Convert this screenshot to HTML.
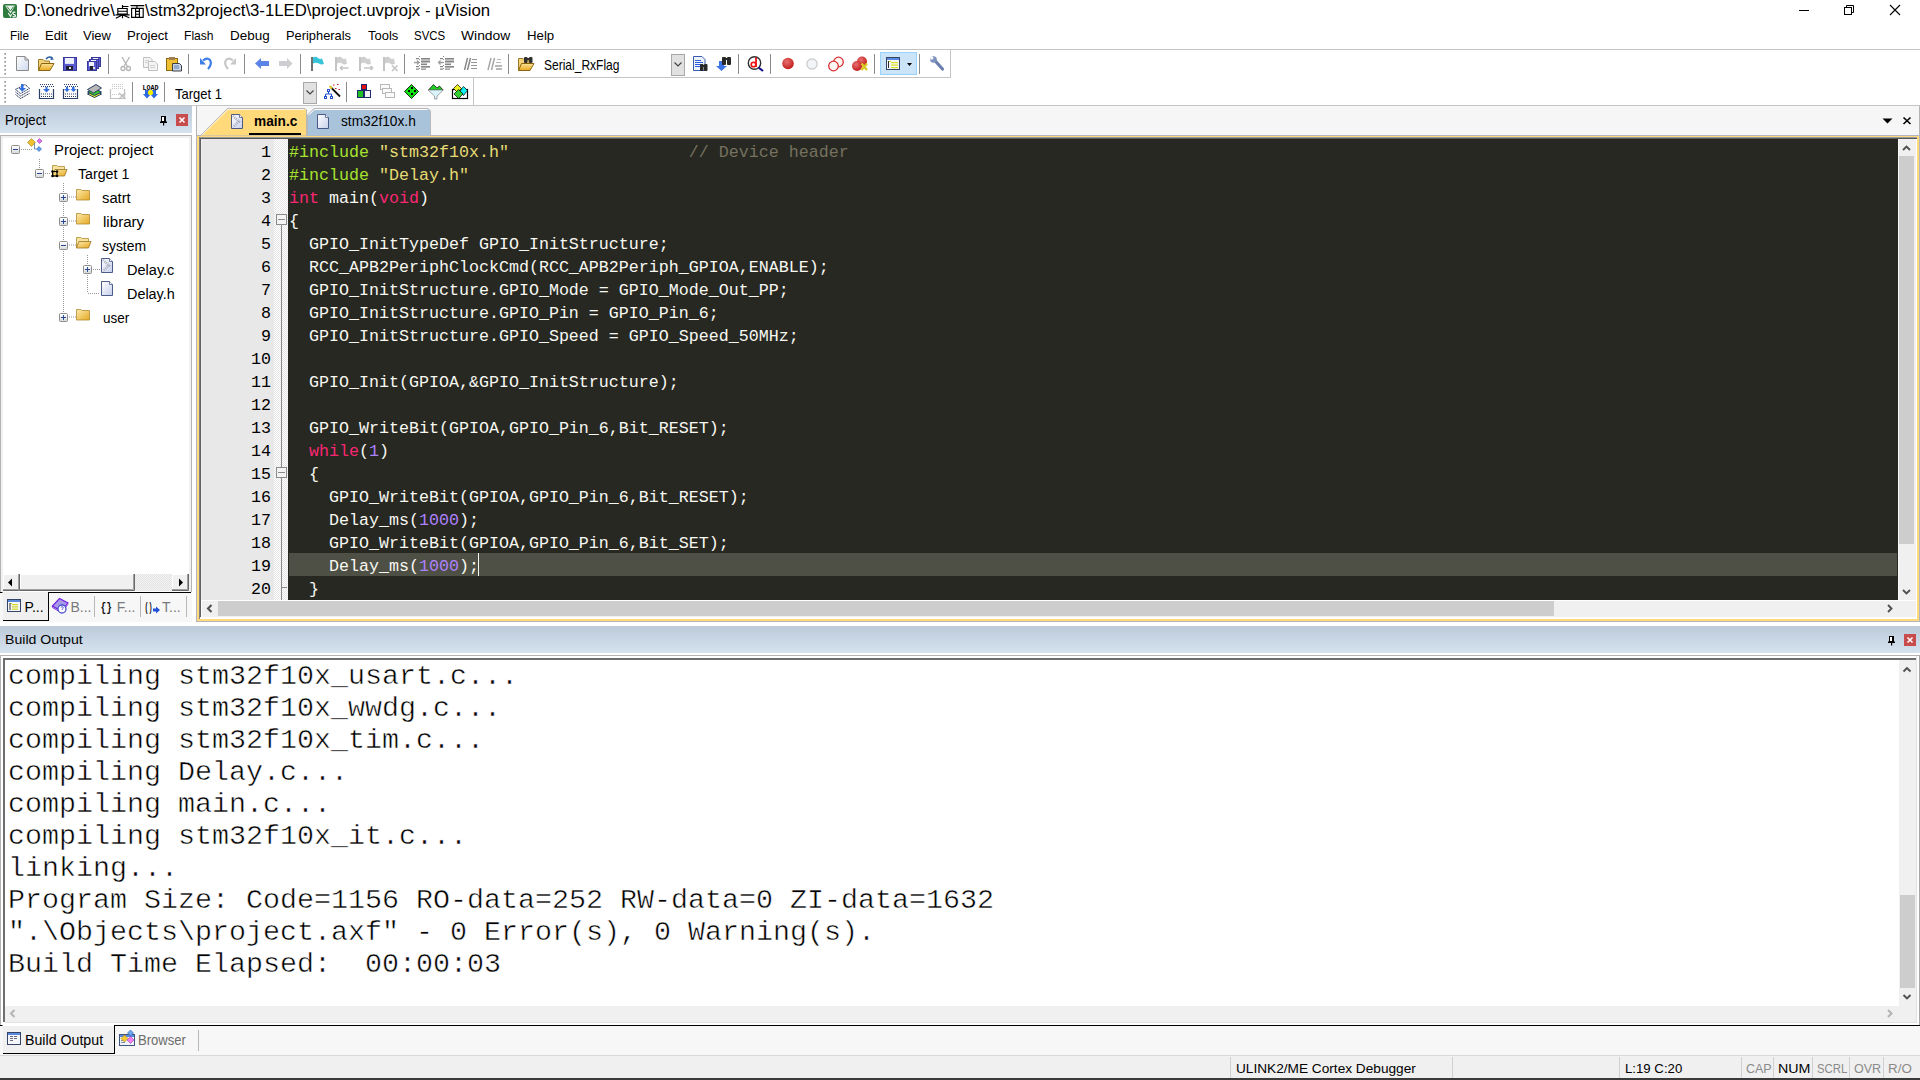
<!DOCTYPE html>
<html><head><meta charset="utf-8">
<style>
*{margin:0;padding:0;box-sizing:border-box}
html,body{width:1920px;height:1080px;overflow:hidden;background:#fff;font-family:"Liberation Sans",sans-serif;color:#000}
.a{position:absolute;display:block}
.t{position:absolute;white-space:pre;line-height:1}
.hdr{background:linear-gradient(#bccad9,#d6e2ef)}
.code{position:absolute;left:289px;font-family:"Liberation Mono",monospace;font-size:16.67px;line-height:23px;color:#f8f8f2;white-space:pre}
.kw{color:#f92672}.pp{color:#a6e22e}.st{color:#e6db74}.nu{color:#ae81ff}.cm{color:#75715e}
.ln{position:absolute;left:201px;width:70px;text-align:right;font-family:"Liberation Mono",monospace;font-size:16.67px;line-height:23px;color:#000;white-space:pre}
.bo{position:absolute;left:8px;-webkit-text-stroke:0.5px #fff;font-family:"Liberation Mono",monospace;font-size:28.33px;line-height:32px;color:#000;white-space:pre}
</style></head><body>
<svg class="a" style="left:0px;top:0px" width="1920" height="26" viewBox="0 0 1920 26"><rect x="3" y="4" width="14" height="14" rx="2" fill="#2f7a3d"/><path d="M5 5.5 L10.5 13.5 L15 5.5 Z" fill="#e8f2ea"/><path d="M7 6.5 L10.5 11 L13.5 6.5" fill="none" stroke="#2f7a3d" stroke-width="0.9"/><path d="M8.2 13 L10.5 16.5 L11.5 14" fill="none" stroke="#e8f2ea" stroke-width="1.2"/><path d="M15.5 12.3 Q13 11.5 12.8 13.2 Q12.8 14.4 14.3 14.6 Q15.8 15 15.3 16.3 Q14.8 17.3 12.6 16.6" fill="none" stroke="#ffffff" stroke-width="1.2"/><rect x="1799" y="10" width="10" height="1" fill="#000"/><path d="M1846.5 7.5 V5.5 H1853.5 V12.5 H1851.5" fill="none" stroke="#000"/><rect x="1844.5" y="7.5" width="7" height="7" fill="none" stroke="#000"/><path d="M1890 5 L1900 15 M1900 5 L1890 15" stroke="#000" stroke-width="1.1"/><g stroke="#000" stroke-width="1.15" fill="none" stroke-linecap="butt"><path d="M122.5 5 V8.5 M122.5 6.5 H128.5 M117.8 8.5 H127.2 V14 H117.8 Z M117.8 11.2 H127.2 M115.5 14.8 H129.6 M122.5 14.8 V18.2 M121.8 15.2 L115.8 18.2 M123.2 15.2 L129.4 17.8"/><path d="M130.5 5.6 H144.3 M137.3 5.6 L136.6 8.4 M131.6 8.4 H143.2 V17.4 H131.6 Z M135.6 8.4 V17.4 M139.4 8.4 V17.4 M135.6 11.3 H139.4 M135.6 14.2 H139.4"/></g></svg>
<div class="t" style="left:23.80px;top:3.46px;font-size:16.0px;transform:scaleX(1.0531);transform-origin:0 0;">D:\onedrive\</div>
<div class="t" style="left:145.30px;top:3.46px;font-size:16.0px;transform:scaleX(1.0456);transform-origin:0 0;">\stm32project\3-1LED\project.uvprojx - µVision</div>
<div class="t" style="left:9.75px;top:29.09px;font-size:13.6px;transform:scaleX(0.8664);transform-origin:0 0;">File</div>
<div class="t" style="left:44.60px;top:29.09px;font-size:13.6px;transform:scaleX(0.9519);transform-origin:0 0;">Edit</div>
<div class="t" style="left:82.50px;top:29.09px;font-size:13.6px;transform:scaleX(0.9599);transform-origin:0 0;">View</div>
<div class="t" style="left:126.50px;top:29.09px;font-size:13.6px;transform:scaleX(0.9686);transform-origin:0 0;">Project</div>
<div class="t" style="left:183.50px;top:29.09px;font-size:13.6px;transform:scaleX(0.8902);transform-origin:0 0;">Flash</div>
<div class="t" style="left:229.75px;top:29.09px;font-size:13.6px;transform:scaleX(0.9891);transform-origin:0 0;">Debug</div>
<div class="t" style="left:285.60px;top:29.09px;font-size:13.6px;transform:scaleX(0.9450);transform-origin:0 0;">Peripherals</div>
<div class="t" style="left:367.50px;top:29.09px;font-size:13.6px;transform:scaleX(0.9526);transform-origin:0 0;">Tools</div>
<div class="t" style="left:414.40px;top:29.09px;font-size:13.6px;transform:scaleX(0.8427);transform-origin:0 0;">SVCS</div>
<div class="t" style="left:461.25px;top:29.09px;font-size:13.6px;transform:scaleX(1.0193);transform-origin:0 0;">Window</div>
<div class="t" style="left:526.50px;top:29.09px;font-size:13.6px;transform:scaleX(0.9738);transform-origin:0 0;">Help</div>
<div class="a" style="left:0;top:49px;width:1920px;height:1px;background:#c4c4c4"></div>
<div class="a" style="left:0;top:77px;width:951px;height:1px;background:#c4c4c4"></div>
<div class="a" style="left:950px;top:49px;width:1px;height:29px;background:#c4c4c4"></div>
<div class="a" style="left:473px;top:77px;width:1px;height:29px;background:#c4c4c4"></div>
<div class="a" style="left:0;top:105px;width:1920px;height:1px;background:#c4c4c4"></div>
<svg class="a" style="left:0;top:0" width="960" height="110" viewBox="0 0 960 110"><defs><linearGradient id="gPage" x1="0" y1="0" x2="1" y2="1"><stop offset="0" stop-color="#ffffff"/><stop offset="1" stop-color="#cfd8ee"/></linearGradient><linearGradient id="gFold" x1="0" y1="0" x2="0" y2="1"><stop offset="0" stop-color="#fbe39a"/><stop offset="1" stop-color="#e9a91c"/></linearGradient><radialGradient id="gRed" cx="0.4" cy="0.35" r="0.7"><stop offset="0" stop-color="#e87070"/><stop offset="1" stop-color="#c01818"/></radialGradient></defs><rect x="4" y="53" width="2" height="2" fill="#c4c4c4"/><rect x="5" y="53" width="1" height="1" fill="#8c8c8c"/><rect x="4" y="57" width="2" height="2" fill="#c4c4c4"/><rect x="5" y="57" width="1" height="1" fill="#8c8c8c"/><rect x="4" y="61" width="2" height="2" fill="#c4c4c4"/><rect x="5" y="61" width="1" height="1" fill="#8c8c8c"/><rect x="4" y="65" width="2" height="2" fill="#c4c4c4"/><rect x="5" y="65" width="1" height="1" fill="#8c8c8c"/><rect x="4" y="69" width="2" height="2" fill="#c4c4c4"/><rect x="5" y="69" width="1" height="1" fill="#8c8c8c"/><rect x="4" y="73" width="2" height="2" fill="#c4c4c4"/><rect x="5" y="73" width="1" height="1" fill="#8c8c8c"/><path d="M16.5 56.5 H25 L28.5 60 V70.5 H16.5 Z" fill="url(#gPage)" stroke="#8a8a8a"/><path d="M25 56.5 V60 H28.5" fill="none" stroke="#8a8a8a"/><path d="M38.5 70.5 V59.5 H43 L44.5 61 H49.5 V63" fill="#f3d27a" stroke="#9b7a2a"/><path d="M38.5 70.5 L41.5 63.5 H54 L50 70.5 Z" fill="url(#gFold)" stroke="#8a6410"/><path d="M46 59 Q49 55.5 52.5 58" fill="none" stroke="#2a60a0" stroke-width="1.5"/><path d="M51 56.5 L54 59.5 L50.5 60 Z" fill="#2a60a0"/><rect x="63.5" y="57.5" width="13" height="13" fill="#5a5ad0" stroke="#38389a"/><rect x="65" y="58" width="9" height="5.9" fill="#eef0fa"/><rect x="66" y="66" width="7" height="4" fill="#202030"/><rect x="69" y="67" width="2" height="2" fill="#e0e0e0"/><rect x="91.5" y="57.5" width="9" height="9" fill="#5a5ad0" stroke="#38389a"/><rect x="93" y="58" width="5" height="4.2" fill="#eef0fa"/><rect x="94" y="62" width="3" height="4" fill="#202030"/><rect x="97" y="63" width="2" height="2" fill="#e0e0e0"/><rect x="89.5" y="59.5" width="9" height="9" fill="#5a5ad0" stroke="#38389a"/><rect x="91" y="60" width="5" height="4.2" fill="#eef0fa"/><rect x="92" y="64" width="3" height="4" fill="#202030"/><rect x="95" y="65" width="2" height="2" fill="#e0e0e0"/><rect x="87.5" y="61.5" width="9" height="9" fill="#5a5ad0" stroke="#38389a"/><rect x="89" y="62" width="5" height="4.2" fill="#eef0fa"/><rect x="90" y="66" width="3" height="4" fill="#202030"/><rect x="93" y="67" width="2" height="2" fill="#e0e0e0"/><rect x="108" y="54" width="1" height="20" fill="#8c8c8c"/><g stroke="#b4b4b4" fill="none" stroke-width="1.3"><path d="M122 57 L127.5 66.5 M129.5 57 L124 66.5"/><circle cx="123" cy="68.5" r="2"/><circle cx="128.5" cy="68.5" r="2"/></g><path d="M143.5 57.5 H150 L152 59.5 V67.5 H143.5 Z" fill="#f4f4f4" stroke="#c0c0c0"/><path d="M148.5 61.5 H155 L157.5 64 V70.5 H148.5 Z" fill="#f4f4f4" stroke="#c0c0c0"/><path d="M145 60.5h4M145 62.5h4M150 65.5h5M150 67.5h5" stroke="#d0d0d0"/><rect x="166.5" y="58.5" width="11" height="12" fill="#f0c030" stroke="#8a6a10"/><rect x="169" y="57" width="6" height="3" fill="#a08050"/><path d="M172.5 63.5 H179.5 L181.5 65.5 V71 H172.5 Z" fill="#c8d4e8" stroke="#404040"/><path d="M174 66h5M174 68h5" stroke="#6080b0"/><rect x="188" y="54" width="1" height="20" fill="#8c8c8c"/><path d="M203 60.5 Q207 57 210 60 Q212.5 64 208 69" fill="none" stroke="#3d7fe6" stroke-width="2.2"/><path d="M200 58 L200 64.5 L206 64.5 Z" fill="#3d7fe6"/><path d="M233 60.5 Q229 57 226 60 Q223.5 64 228 69" fill="none" stroke="#c8c8c8" stroke-width="2.2"/><path d="M236 58 L236 64.5 L230 64.5 Z" fill="#c8c8c8"/><rect x="244" y="54" width="1" height="20" fill="#8c8c8c"/><path d="M255 63.5 L261 58 V61 H269 V66 H261 V69 Z" fill="#5a84e6"/><path d="M292.5 63.5 L287 58 V61 H279 V66 H287 V69 Z" fill="#cdcdd2"/><rect x="300" y="54" width="1" height="20" fill="#8c8c8c"/><rect x="311" y="57" width="2" height="14" fill="#707070"/><path d="M313 57.5 Q316 56 318 58 Q320 59.5 322 58.5 L324 64 Q321 65 319 63.5 Q316 62 313 63.5 Z" fill="#38c4d8"/><rect x="335" y="57" width="2" height="14" fill="#c4c4c4"/><path d="M337 57.5 Q340 56 342 58 Q344 59.5 346 58.5 L347 64 Q344 65 342 63.5 Q340 62 337 63.5 Z" fill="#cfcfcf"/><path d="M340 68 H348.5 M340 68 L342.5 66 M340 68 L342.5 70" stroke="#c4c4c4" stroke-width="1.6"/><rect x="359" y="57" width="2" height="14" fill="#c4c4c4"/><path d="M361 57.5 Q364 56 366 58 Q368 59.5 370 58.5 L371 64 Q368 65 366 63.5 Q364 62 361 63.5 Z" fill="#cfcfcf"/><path d="M364 68 H373 M373 68 L370.5 66 M373 68 L370.5 70" stroke="#c4c4c4" stroke-width="1.6"/><rect x="383" y="57" width="2" height="14" fill="#c4c4c4"/><path d="M385 57.5 Q388 56 390 58 Q392 59.5 394 58.5 L395 64 Q392 65 390 63.5 Q388 62 385 63.5 Z" fill="#cfcfcf"/><path d="M392 65.5 L397.5 71 M397.5 65.5 L392 71" stroke="#c4c4c4" stroke-width="1.6"/><rect x="404" y="54" width="1" height="20" fill="#8c8c8c"/><g fill="#858585"><rect x="421" y="58" width="9" height="1.6"/><rect x="421" y="60.5" width="9" height="2"/><rect x="421" y="63.5" width="6" height="1.6"/><rect x="421" y="66" width="9" height="1.6"/><rect x="416" y="58" width="3" height="1.2"/><rect x="416" y="66" width="3" height="1.2"/><rect x="416" y="68.5" width="3" height="1.2"/><rect x="421" y="68.5" width="5" height="1.2"/></g><path d="M414 62.5 H419 M417 60.5 L419 62.5 L417 64.5" stroke="#a0a0a0" stroke-width="1.3" fill="none"/><path d="M419.5 56 V71" stroke="#909090" stroke-dasharray="1,2"/><g fill="#858585"><rect x="445" y="58" width="9" height="1.6"/><rect x="445" y="60.5" width="9" height="2"/><rect x="445" y="63.5" width="6" height="1.6"/><rect x="445" y="66" width="9" height="1.6"/><rect x="440" y="58" width="3" height="1.2"/><rect x="440" y="66" width="3" height="1.2"/><rect x="440" y="68.5" width="3" height="1.2"/><rect x="445" y="68.5" width="5" height="1.2"/></g><path d="M443 62.5 H438.5 M440.5 60.5 L438.5 62.5 L440.5 64.5" stroke="#a0a0a0" stroke-width="1.3" fill="none"/><path d="M443.5 56 V71" stroke="#909090" stroke-dasharray="1,2"/><path d="M464.5 70 L467.5 58 M467.5 70 L470.5 58" stroke="#8a8a8a" stroke-width="1.5"/><g fill="#959595"><rect x="472" y="59" width="5" height="1"/><rect x="471" y="62" width="6" height="1"/><rect x="471" y="65" width="6" height="1"/><rect x="471" y="68" width="6" height="1"/></g><path d="M488 70 L491 58 M491.5 70 L494.5 58" stroke="#a8a8a8" stroke-width="1.5"/><g fill="#b8b8b8"><rect x="497" y="59" width="4" height="1"/><rect x="496" y="62" width="5" height="1"/><rect x="495" y="65" width="7" height="2"/><rect x="496" y="68" width="6" height="2"/></g><rect x="508" y="54" width="1" height="20" fill="#8c8c8c"/><path d="M518.5 70.5 V58.5 H523 L524.5 60 H529 V63" fill="#f3d27a" stroke="#9b7a2a"/><path d="M518.5 70.5 L521.5 63.5 H534 L530 70.5 Z" fill="url(#gFold)" stroke="#8a6410"/><g fill="#303030"><rect x="524" y="57" width="3.5" height="6" rx="1"/><rect x="529" y="57" width="3.5" height="6" rx="1"/><rect x="526" y="58" width="4" height="2"/></g><rect x="671.5" y="54.5" width="13" height="21" fill="#e1e1e1" stroke="#a8a8a8"/><path d="M674.5 62.5 L678 66 L681.5 62.5" fill="none" stroke="#404040" stroke-width="1.1"/><path d="M693.5 56.5 H702 L705 59.5 V70.5 H693.5 Z" fill="#eef2fb" stroke="#3a5ab0"/><g fill="#2d5ee0"><rect x="695" y="60" width="6" height="1"/><rect x="695" y="62" width="8" height="1"/><rect x="695" y="64" width="6" height="1"/><rect x="695" y="66" width="5" height="1"/></g><g fill="#282828"><rect x="700" y="64" width="3.5" height="7" rx="1"/><rect x="704" y="64" width="3.5" height="7" rx="1"/><rect x="702" y="65" width="3" height="2"/></g><path d="M716 66 H719 V61 H724 V66 H727 L721.5 71 Z" fill="#3d74e8"/><g fill="#282828"><rect x="722" y="57" width="4" height="8" rx="1"/><rect x="727" y="57" width="4" height="8" rx="1"/><rect x="724" y="58" width="4" height="2"/></g><rect x="738" y="54" width="1" height="20" fill="#8c8c8c"/><circle cx="754.5" cy="63" r="6.2" fill="#fff" stroke="#303030" stroke-width="1.4"/><path d="M758.5 67.5 L763 71" stroke="#10108a" stroke-width="2.2"/><path d="M756 57.5 V67" stroke="#f01010" stroke-width="1.8"/><circle cx="753.5" cy="64.5" r="2.3" fill="none" stroke="#f01010" stroke-width="1.6"/><rect x="770" y="54" width="1" height="20" fill="#8c8c8c"/><circle cx="788" cy="63.5" r="5.8" fill="url(#gRed)"/><circle cx="812" cy="64" r="5.2" fill="#f2f4f8" stroke="#c8c8cc" stroke-width="1.2"/><circle cx="838.5" cy="62" r="4.8" fill="#fff4f4" stroke="#d83030" stroke-width="1.3"/><circle cx="833.5" cy="66" r="4.8" fill="#fff4f4" stroke="#d83030" stroke-width="1.3"/><circle cx="862" cy="61.5" r="5" fill="url(#gRed)"/><circle cx="857" cy="66" r="5" fill="url(#gRed)"/><path d="M861.5 63.5 L867 70 M867 63.5 L861.5 70" stroke="#d8c820" stroke-width="2.4"/><rect x="874" y="54" width="1" height="20" fill="#8c8c8c"/><rect x="880.5" y="52.5" width="36" height="22" fill="#cce4f7" stroke="#99d1ff"/><rect x="886.5" y="57.5" width="13" height="12" fill="#f4f6fb" stroke="#334466"/><rect x="887" y="58" width="12" height="2" fill="#5a8ae0"/><g fill="#d8e020"><rect x="889" y="61" width="2" height="1"/><rect x="891" y="62" width="7" height="1.2"/><rect x="891" y="64.5" width="7" height="1.2"/><rect x="891" y="67" width="7" height="1.2"/></g><rect x="888" y="61" width="1" height="7" fill="#303030"/><path d="M907 63 H912 L909.5 66 Z" fill="#000"/><rect x="919" y="54" width="1" height="20" fill="#8c8c8c"/><path d="M933 58.5 L942.5 69" stroke="#6a7fae" stroke-width="3.2" stroke-linecap="round"/><circle cx="933.5" cy="59.5" r="3.3" fill="#7f93c0"/><circle cx="931.8" cy="58" r="1.6" fill="#fff"/><rect x="4" y="81" width="2" height="2" fill="#c4c4c4"/><rect x="5" y="81" width="1" height="1" fill="#8c8c8c"/><rect x="4" y="85" width="2" height="2" fill="#c4c4c4"/><rect x="5" y="85" width="1" height="1" fill="#8c8c8c"/><rect x="4" y="89" width="2" height="2" fill="#c4c4c4"/><rect x="5" y="89" width="1" height="1" fill="#8c8c8c"/><rect x="4" y="93" width="2" height="2" fill="#c4c4c4"/><rect x="5" y="93" width="1" height="1" fill="#8c8c8c"/><rect x="4" y="97" width="2" height="2" fill="#c4c4c4"/><rect x="5" y="97" width="1" height="1" fill="#8c8c8c"/><rect x="4" y="101" width="2" height="2" fill="#c4c4c4"/><rect x="5" y="101" width="1" height="1" fill="#8c8c8c"/><g fill="none" stroke="#1c2c54" stroke-width="1" stroke-dasharray="1.4,0.6"><path d="M15.5 94.4 L20.5 98.5 L29.5 93.4"/><path d="M15.5 91.9 L20.5 96 L29.5 90.9"/></g><path d="M15.5 89.4 L25 84.5 L29.5 88.4 L20.5 93.5 Z" fill="#fff" stroke="#1c2c54" stroke-width="1" stroke-dasharray="1.4,0.6"/><path d="M21 84 H23.5 V88 H26 L22.2 91.8 L18.5 88 H21 Z" fill="#3570e0"/><path d="M39.5 89 V98.5 H53.5 V89" fill="none" stroke="#2a3f66" stroke-width="1.2"/><g fill="#2a3f66"><rect x="41" y="93.5" width="1" height="1"/><rect x="41" y="96" width="1" height="1"/><rect x="43" y="93.5" width="1" height="1"/><rect x="43" y="96" width="1" height="1"/><rect x="45" y="93.5" width="1" height="1"/><rect x="45" y="96" width="1" height="1"/><rect x="47" y="93.5" width="1" height="1"/><rect x="47" y="96" width="1" height="1"/><rect x="49" y="93.5" width="1" height="1"/><rect x="49" y="96" width="1" height="1"/><rect x="51" y="93.5" width="1" height="1"/><rect x="51" y="96" width="1" height="1"/></g><g fill="#2a3f66"><rect x="40" y="84" width="1" height="1"/><rect x="41" y="86" width="1" height="1"/><rect x="42" y="84" width="1" height="1"/><rect x="43" y="86" width="1" height="1"/><rect x="44" y="84" width="1" height="1"/><rect x="45" y="86" width="1" height="1"/><rect x="46" y="84" width="1" height="1"/><rect x="47" y="86" width="1" height="1"/><rect x="48" y="84" width="1" height="1"/><rect x="49" y="86" width="1" height="1"/><rect x="50" y="84" width="1" height="1"/><rect x="51" y="86" width="1" height="1"/><rect x="52" y="84" width="1" height="1"/><rect x="53" y="86" width="1" height="1"/></g><path d="M45.5 87 V89 H43 L46.5 92.5 L50 89 H47.5 V87 Z" fill="#3570e0"/><path d="M63.5 89 V98.5 H77.5 V89" fill="none" stroke="#2a3f66" stroke-width="1.2"/><g fill="#2a3f66"><rect x="65" y="93.5" width="1" height="1"/><rect x="65" y="96" width="1" height="1"/><rect x="67" y="93.5" width="1" height="1"/><rect x="67" y="96" width="1" height="1"/><rect x="69" y="93.5" width="1" height="1"/><rect x="69" y="96" width="1" height="1"/><rect x="71" y="93.5" width="1" height="1"/><rect x="71" y="96" width="1" height="1"/><rect x="73" y="93.5" width="1" height="1"/><rect x="73" y="96" width="1" height="1"/><rect x="75" y="93.5" width="1" height="1"/><rect x="75" y="96" width="1" height="1"/></g><g fill="#2a3f66"><rect x="64" y="84" width="1" height="1"/><rect x="65" y="86" width="1" height="1"/><rect x="66" y="84" width="1" height="1"/><rect x="67" y="86" width="1" height="1"/><rect x="68" y="84" width="1" height="1"/><rect x="69" y="86" width="1" height="1"/><rect x="70" y="84" width="1" height="1"/><rect x="71" y="86" width="1" height="1"/><rect x="72" y="84" width="1" height="1"/><rect x="73" y="86" width="1" height="1"/><rect x="74" y="84" width="1" height="1"/><rect x="75" y="86" width="1" height="1"/><rect x="76" y="84" width="1" height="1"/><rect x="77" y="86" width="1" height="1"/></g><path d="M66 87 V89 H64 L67 92 L70 89 H68 V87 Z" fill="#3570e0"/><path d="M72 87 V89 H70.5 L73.5 92 L76.5 89 H74.5 V87 Z" fill="#3570e0"/><path d="M87.5 94 L94.5 90.5 L101.5 94 L94.5 97.5 Z" fill="#e8f020" stroke="#2a3f66"/><path d="M87.5 92 L94.5 88.5 L101.5 92 L94.5 95.5 Z" fill="#30c030" stroke="#2a3f66"/><path d="M87.5 89.5 L96 84.5 L101.5 88 L93.5 93 Z" fill="#b8b8b8" stroke="#2a3f66"/><path d="M110.5 89 V98.5 H124.5 V89" fill="none" stroke="#c0c0c0" stroke-width="1.2"/><g fill="#c8c8c8"><rect x="112" y="84" width="1" height="1"/><rect x="112" y="86" width="1" height="1"/><rect x="112" y="88" width="1" height="1"/><rect x="112" y="94" width="1" height="1"/><rect x="114" y="84" width="1" height="1"/><rect x="114" y="86" width="1" height="1"/><rect x="114" y="88" width="1" height="1"/><rect x="114" y="94" width="1" height="1"/><rect x="116" y="84" width="1" height="1"/><rect x="116" y="86" width="1" height="1"/><rect x="116" y="88" width="1" height="1"/><rect x="116" y="94" width="1" height="1"/><rect x="118" y="84" width="1" height="1"/><rect x="118" y="86" width="1" height="1"/><rect x="118" y="88" width="1" height="1"/><rect x="118" y="94" width="1" height="1"/><rect x="120" y="84" width="1" height="1"/><rect x="120" y="86" width="1" height="1"/><rect x="120" y="88" width="1" height="1"/><rect x="120" y="94" width="1" height="1"/><rect x="122" y="84" width="1" height="1"/><rect x="122" y="86" width="1" height="1"/><rect x="122" y="88" width="1" height="1"/><rect x="122" y="94" width="1" height="1"/></g><path d="M119 93 L125.5 99 M125.5 93 L119 99" stroke="#c0c0c0" stroke-width="1.6"/><rect x="132" y="82" width="1" height="20" fill="#8c8c8c"/><text x="142.5" y="89.5" font-family="Liberation Mono" font-weight="bold" font-size="7.5" fill="#000" textLength="16" lengthAdjust="spacingAndGlyphs">LOAD</text><path d="M143 94 L147 98.5 L151 94 H149 V90 H145 V94 Z" fill="#2f6ae0"/><path d="M150 94 L154 98.5 L158 94 H156 V90 H152 V94 Z" fill="#2f6ae0"/><circle cx="150.5" cy="92.5" r="2.6" fill="#f6f000"/><rect x="164" y="82" width="1" height="20" fill="#8c8c8c"/><rect x="303.5" y="82.5" width="13" height="21" fill="#e1e1e1" stroke="#a8a8a8"/><path d="M306.5 90.5 L310 94 L313.5 90.5" fill="none" stroke="#404040" stroke-width="1.1"/><path d="M330.5 87 L340 96.5" stroke="#101010" stroke-width="1.8"/><path d="M329.5 86 L332 88.5" stroke="#e0d020" stroke-width="1.8"/><g fill="#d02020"><rect x="333" y="84.5" width="1.5" height="1"/><rect x="337" y="84" width="1.5" height="1"/><rect x="335" y="88" width="1.5" height="1"/><rect x="338.5" y="89" width="1.5" height="1"/></g><g fill="none" stroke="#2050d0"><rect x="327.5" y="89.5" width="2" height="2"/><rect x="324.5" y="96.5" width="2" height="2"/><rect x="330.5" y="96.5" width="2" height="2"/><path d="M328.5 91.5 V94 H325.5 V96.5 M328.5 94 H331.5 V96.5"/></g><rect x="346" y="82" width="1" height="20" fill="#8c8c8c"/><rect x="361.5" y="84.5" width="5" height="5" fill="#e01010" stroke="#1a2a6a"/><rect x="357.5" y="90.5" width="6" height="7" fill="#20c020" stroke="#1a2a6a"/><rect x="364.5" y="90.5" width="6" height="7" fill="#f4f4f4" stroke="#1a2a6a"/><g fill="#fafafa" stroke="#b8b8b8"><rect x="380.5" y="84.5" width="9" height="5"/><rect x="382.5" y="88.5" width="9" height="5"/><rect x="385.5" y="92.5" width="9" height="5"/></g><path d="M411.5 84.5 L418.5 91.5 L411.5 98.5 L404.5 91.5 Z" fill="#10e010" stroke="#000" stroke-width="0.8"/><g fill="#000"><rect x="411" y="87" width="2" height="2"/><rect x="408" y="90" width="2" height="2"/><rect x="414" y="90" width="2" height="2"/><rect x="411" y="93" width="2" height="2"/></g><path d="M428.5 90 L433.5 84.5 L437 88 L439.5 86 L443 90 Z" fill="#20d020" stroke="#000" stroke-width="0.7"/><path d="M428 90 H443.5 L437 96 V99 H434.5 V96 Z" fill="#d8f4fa" stroke="#909090" stroke-width="0.8"/><rect x="452.5" y="89.5" width="15" height="9" fill="#fff" stroke="#000" stroke-width="1.2"/><path d="M457.5 84.5 L461.5 88.5 L457.5 92.5 L453.5 88.5 Z" fill="#f0f020" stroke="#000" stroke-width="0.7"/><path d="M463.5 86.5 L467.5 90.5 L463.5 95.5 L460 91 Z" fill="#10f0f0" stroke="#000" stroke-width="0.7"/><path d="M458.5 89.5 L463 94 L458.5 98.5 L454 94 Z" fill="#30d030" stroke="#000" stroke-width="0.7"/></svg>
<div class="t" style="left:543.50px;top:57.76px;font-size:14.1px;transform:scaleX(0.8526);transform-origin:0 0;">Serial_RxFlag</div>
<div class="t" style="left:175.00px;top:86.73px;font-size:14.5px;transform:scaleX(0.8954);transform-origin:0 0;">Target 1</div>
<div class="a" style="left:196px;top:106px;width:1724px;height:30px;background:#f6f6f6"></div>
<div class="a" style="left:196px;top:106px;width:1px;height:30px;background:#b4b4b4"></div>
<div class="a" style="left:1919px;top:106px;width:1px;height:30px;background:#b4b4b4"></div>
<div class="a hdr" style="left:0;top:106px;width:192px;height:27px"></div>
<div class="t" style="left:4.75px;top:112.73px;font-size:14.5px;transform:scaleX(0.9051);transform-origin:0 0;">Project</div>
<div class="a" style="left:0;top:135px;width:192px;height:457px;background:#fff;border-top:1px solid #b4b4b4;border-left:1px solid #b4b4b4;border-right:1px solid #b4b4b4"></div>
<div class="a" style="left:1px;top:136px;width:190px;height:2px;background:#f0f0f0"></div>
<div class="a" style="left:1px;top:136px;width:2px;height:456px;background:#f0f0f0"></div>
<div class="a" style="left:189px;top:136px;width:2px;height:456px;background:#f0f0f0"></div>
<div class="t" style="left:54.40px;top:141.96px;font-size:15.4px;transform:scaleX(0.9672);transform-origin:0 0;">Project: project</div>
<div class="t" style="left:78.00px;top:165.96px;font-size:15.4px;transform:scaleX(0.9221);transform-origin:0 0;">Target 1</div>
<div class="t" style="left:102.25px;top:189.96px;font-size:15.4px;transform:scaleX(0.9598);transform-origin:0 0;">satrt</div>
<div class="t" style="left:102.70px;top:213.96px;font-size:15.4px;transform:scaleX(0.9827);transform-origin:0 0;">library</div>
<div class="t" style="left:102.30px;top:237.96px;font-size:15.4px;transform:scaleX(0.9041);transform-origin:0 0;">system</div>
<div class="t" style="left:126.70px;top:261.96px;font-size:15.4px;transform:scaleX(0.9441);transform-origin:0 0;">Delay.c</div>
<div class="t" style="left:126.70px;top:285.96px;font-size:15.4px;transform:scaleX(0.9356);transform-origin:0 0;">Delay.h</div>
<div class="t" style="left:102.70px;top:309.96px;font-size:15.4px;transform:scaleX(0.8780);transform-origin:0 0;">user</div>
<svg class="a" style="left:0px;top:136px" width="192" height="200" viewBox="0 136 192 200"><defs><linearGradient id="gExp" x1="0" y1="0" x2="0" y2="1"><stop offset="0" stop-color="#ffffff"/><stop offset="1" stop-color="#d8d8d8"/></linearGradient><linearGradient id="gFolder" x1="0" y1="0" x2="1" y2="1"><stop offset="0" stop-color="#fcebb0"/><stop offset="1" stop-color="#e6a820"/></linearGradient><linearGradient id="gFile" x1="0" y1="0" x2="1" y2="1"><stop offset="0" stop-color="#ffffff"/><stop offset="1" stop-color="#c6d0ec"/></linearGradient></defs><rect x="11.5" y="145.5" width="8" height="8" rx="1" fill="url(#gExp)" stroke="#8c8c8c"/><rect x="13" y="149" width="5" height="1" fill="#2c4a9a"/><path d="M21 149.5 H32" stroke="#9a9a9a" stroke-dasharray="1,1"/><path d="M27.5 142.5 L31.5 138.5 L35.5 142.5 L31.5 146.5 Z" fill="#f0c030" stroke="#a08020" stroke-width="0.6"/><path d="M37 141 L39.5 138.5 L42 141 L39.5 143.5 Z" fill="#e070f0" stroke="#a040b0" stroke-width="0.6"/><path d="M36.5 149 L39 146.5 L41.5 149 L39 151.5 Z" fill="#60a0f0" stroke="#3060b0" stroke-width="0.6"/><path d="M34.5 143 V149 H36.5" fill="none" stroke="#5070a0" stroke-width="0.8"/><path d="M39.5 159 V169" stroke="#9a9a9a" stroke-dasharray="1,1"/><rect x="35.5" y="169.5" width="8" height="8" rx="1" fill="url(#gExp)" stroke="#8c8c8c"/><rect x="37" y="173" width="5" height="1" fill="#2c4a9a"/><path d="M45 173.5 H51" stroke="#9a9a9a" stroke-dasharray="1,1"/><path d="M52.5 176 V165.5 H57 L58 166.5 H64.5 V169" fill="#f7e3a0" stroke="#b08a30" stroke-width="0.8"/><path d="M52.5 176 L55 169.5 H67 L64.5 176 Z" fill="url(#gFolder)" stroke="#9a7420" stroke-width="0.8"/><g fill="#000"><circle cx="52.5" cy="171.5" r="1.3"/><circle cx="57" cy="171.5" r="1.3"/><circle cx="52.5" cy="176" r="1.3"/><circle cx="57" cy="176" r="1.3"/><rect x="52.5" y="171" width="4.5" height="1"/><rect x="52.5" y="175.5" width="4.5" height="1"/><rect x="52" y="171.5" width="1" height="4.5"/><rect x="56.5" y="171.5" width="1" height="4.5"/></g><path d="M63.5 183 V313" stroke="#9a9a9a" stroke-dasharray="1,1"/><rect x="59.5" y="193.5" width="8" height="8" rx="1" fill="url(#gExp)" stroke="#8c8c8c"/><rect x="61" y="197" width="5" height="1" fill="#2c4a9a"/><rect x="63" y="195" width="1" height="5" fill="#2c4a9a"/><path d="M69 197.0 H76" stroke="#9a9a9a" stroke-dasharray="1,1"/><path d="M76.5 200 V189.5 H81 L82 190.5 H89.5 V200 Z" fill="url(#gFolder)" stroke="#b08a30" stroke-width="0.8"/><rect x="59.5" y="217.5" width="8" height="8" rx="1" fill="url(#gExp)" stroke="#8c8c8c"/><rect x="61" y="221" width="5" height="1" fill="#2c4a9a"/><rect x="63" y="219" width="1" height="5" fill="#2c4a9a"/><path d="M69 221.0 H76" stroke="#9a9a9a" stroke-dasharray="1,1"/><path d="M76.5 224 V213.5 H81 L82 214.5 H89.5 V224 Z" fill="url(#gFolder)" stroke="#b08a30" stroke-width="0.8"/><rect x="59.5" y="241.5" width="8" height="8" rx="1" fill="url(#gExp)" stroke="#8c8c8c"/><rect x="61" y="245" width="5" height="1" fill="#2c4a9a"/><path d="M69 245.0 H76" stroke="#9a9a9a" stroke-dasharray="1,1"/><path d="M76.5 248 V237.5 H81 L82 238.5 H88.5 V241" fill="#f7e3a0" stroke="#b08a30" stroke-width="0.8"/><path d="M76.5 248 L79 241.5 H91 L88.5 248 Z" fill="url(#gFolder)" stroke="#9a7420" stroke-width="0.8"/><rect x="59.5" y="313.5" width="8" height="8" rx="1" fill="url(#gExp)" stroke="#8c8c8c"/><rect x="61" y="317" width="5" height="1" fill="#2c4a9a"/><rect x="63" y="315" width="1" height="5" fill="#2c4a9a"/><path d="M69 317.0 H76" stroke="#9a9a9a" stroke-dasharray="1,1"/><path d="M76.5 320 V309.5 H81 L82 310.5 H89.5 V320 Z" fill="url(#gFolder)" stroke="#b08a30" stroke-width="0.8"/><path d="M87.5 255 V265" stroke="#9a9a9a" stroke-dasharray="1,1"/><rect x="83.5" y="265.5" width="8" height="8" rx="1" fill="url(#gExp)" stroke="#8c8c8c"/><rect x="85" y="269" width="5" height="1" fill="#2c4a9a"/><rect x="87" y="267" width="1" height="5" fill="#2c4a9a"/><path d="M93 269.5 H100" stroke="#9a9a9a" stroke-dasharray="1,1"/><path d="M101.5 258.5 H109.5 L112.5 261.5 V272.5 H101.5 Z" fill="url(#gFile)" stroke="#3a4a7a" stroke-width="0.9"/><path d="M109.5 258.5 V261.5 H112.5" fill="#fff" stroke="#3a4a7a" stroke-width="0.7"/><path d="M103 260 L109 265.5 L103 271" fill="none" stroke="#a8a8b8" stroke-width="2.5" stroke-dasharray="1,1"/><path d="M87.5 275 V293" stroke="#9a9a9a" stroke-dasharray="1,1"/><path d="M88 293.5 H100" stroke="#9a9a9a" stroke-dasharray="1,1"/><path d="M101.5 281.5 H109.5 L112.5 284.5 V295.5 H101.5 Z" fill="url(#gFile)" stroke="#3a4a7a" stroke-width="0.9"/><path d="M109.5 281.5 V284.5 H112.5" fill="#fff" stroke="#3a4a7a" stroke-width="0.7"/></svg>
<svg class="a" style="left:0px;top:572px" width="192" height="22" viewBox="0 572 192 22"><defs><pattern id="chk" width="2" height="2" patternUnits="userSpaceOnUse"><rect width="2" height="2" fill="#f4f4f4"/><rect width="1" height="1" fill="#e2e2e2"/><rect x="1" y="1" width="1" height="1" fill="#e2e2e2"/></pattern></defs><rect x="3" y="574" width="186" height="17" fill="url(#chk)"/><rect x="3" y="574" width="17" height="17" fill="#f0f0f0"/><path d="M3.5 590.5 V574.5 H19.5" fill="none" stroke="#ffffff"/><path d="M3 589.5 H18.5 V574" fill="none" stroke="#a0a0a0"/><path d="M3 590.5 H19.5 V574" fill="none" stroke="#696969"/><path d="M8 582.5 L12 578.5 V586.5 Z" fill="#000"/><rect x="20" y="574" width="115" height="17" fill="#f0f0f0"/><path d="M20.5 590.5 V574.5 H134.5" fill="none" stroke="#ffffff"/><path d="M20 589.5 H133.5 V574" fill="none" stroke="#a0a0a0"/><path d="M20 590.5 H134.5 V574" fill="none" stroke="#696969"/><rect x="172" y="574" width="17" height="17" fill="#f0f0f0"/><path d="M172.5 590.5 V574.5 H188.5" fill="none" stroke="#ffffff"/><path d="M172 589.5 H187.5 V574" fill="none" stroke="#a0a0a0"/><path d="M172 590.5 H188.5 V574" fill="none" stroke="#696969"/><path d="M183 582.5 L179 578.5 V586.5 Z" fill="#000"/></svg>
<svg class="a" style="left:0px;top:590px" width="192" height="34" viewBox="0 590 192 34"><rect x="0" y="592" width="192" height="30" fill="#f7f7f7"/><rect x="3" y="592" width="46" height="29" fill="#f0f0f0"/><path d="M0 592.5 H2.5 M48.5 592 V621 M3 620.5 H49 M48.5 592.5 H191" stroke="#000" fill="none"/><rect x="7.5" y="599.5" width="13" height="12" fill="#f4f6fb" stroke="#334466"/><rect x="8" y="600" width="12" height="2" fill="#5a8ae0"/><g fill="#d0d820"><rect x="10" y="603" width="2" height="1"/><rect x="12" y="604" width="6" height="1.2"/><rect x="12" y="606.3" width="6" height="1.2"/><rect x="12" y="608.6" width="6" height="1.2"/></g><rect x="9.5" y="603" width="1" height="7" fill="#303030"/><path d="M52.5 606 L59.5 598.5 L68 603 L61 611 Z" fill="#a898e8" stroke="#7020e0" stroke-width="1.1"/><path d="M52.5 606 V607.5 L61 612.5 L68 604.5" fill="none" stroke="#7020e0" stroke-width="0.9"/><circle cx="62" cy="609" r="4" fill="#fff" stroke="#4a50d0" stroke-width="1.3"/><path d="M60.8 607.5 Q62 605.8 63.3 607.3 Q63.5 608.5 62.2 609.2 V610" fill="none" stroke="#4a50d0" stroke-width="0.9"/><rect x="94" y="596" width="1" height="21" fill="#b8b8b8"/><text x="100.5" y="611" font-family="Liberation Mono" font-weight="bold" font-size="12.5" fill="#101010" textLength="11.5" lengthAdjust="spacingAndGlyphs">{}</text><rect x="140" y="596" width="1" height="21" fill="#b8b8b8"/><text x="144.5" y="611" font-family="Liberation Mono" font-weight="bold" font-size="12.5" fill="#101010" textLength="8" lengthAdjust="spacingAndGlyphs">()</text><path d="M153 608.5 H156 V606.5 L160 610 L156 613.5 V611.5 H153 Z" fill="#2050d8"/><rect x="186" y="596" width="1" height="21" fill="#b8b8b8"/></svg>
<div class="t" style="left:24.40px;top:600.05px;font-size:14px;color:#000">P...</div>
<div class="t" style="left:70.50px;top:600.05px;font-size:14px;color:#7a7a7a">B...</div>
<div class="t" style="left:116.80px;top:600.05px;font-size:14px;color:#7a7a7a">F...</div>
<div class="t" style="left:162.00px;top:600.05px;font-size:14px;color:#7a7a7a">T...</div>
<div class="a" style="left:196px;top:135px;width:1724px;height:487px;background:#b4b4bc"></div>
<div class="a" style="left:197px;top:136px;width:1722px;height:485px;background:#ffd97a"></div>
<div class="a" style="left:199px;top:137px;width:1718px;height:482px;background:#ffffff"></div>
<div class="a" style="left:199px;top:137px;width:1718px;height:1px;background:#9898a0"></div>
<div class="a" style="left:199px;top:137px;width:1px;height:482px;background:#808088"></div>
<div class="a" style="left:200px;top:138px;width:1717px;height:1px;background:#585858"></div>
<div class="a" style="left:200px;top:138px;width:1px;height:479px;background:#606060"></div>
<div class="a" style="left:201px;top:139px;width:1px;height:461px;background:#f0f0f0"></div>
<div class="a" style="left:202px;top:139px;width:72px;height:461px;background:#e8e8e8"></div>
<div class="a" style="left:288px;top:139px;width:1610px;height:461px;background:#272822"></div>
<div class="a" style="left:289px;top:553px;width:1608px;height:23px;background:#4f5045"></div>
<svg class="a" style="left:196px;top:104px" width="1724" height="36" viewBox="196 104 1724 36"><defs><linearGradient id="gFile2" x1="0" y1="0" x2="1" y2="1"><stop offset="0" stop-color="#ffffff"/><stop offset="1" stop-color="#c6d0ec"/></linearGradient></defs><path d="M307.5 135.5 V115 L314 108.5 H428 L430.5 111 V135.5" fill="#a9c3da" stroke="#b8b8b8"/><path d="M308.5 115 L314.5 109.5 H427.5" fill="none" stroke="#ffffff"/><path d="M200.5 135.5 L227.5 108.5 H305 L306.5 110 V135.5" fill="#ffd97a" stroke="#b8b8b8"/><path d="M202 135 L228 109.5 H304.5" fill="none" stroke="#ffffff" stroke-width="0.8"/><rect x="249" y="133" width="52" height="2" fill="#000"/><path d="M231.5 114.5 H239.5 L242.5 117.5 V128.5 H231.5 Z" fill="url(#gFile2)" stroke="#3a4a7a" stroke-width="0.9"/><path d="M239.5 114.5 V117.5 H242.5" fill="#fff" stroke="#3a4a7a" stroke-width="0.7"/><path d="M233 116 L239 121.5 L233 127" fill="none" stroke="#a8a8b8" stroke-width="2.5" stroke-dasharray="1,1"/><path d="M317.5 114.5 H325.5 L328.5 117.5 V128.5 H317.5 Z" fill="url(#gFile2)" stroke="#3a4a7a" stroke-width="0.9"/><path d="M325.5 114.5 V117.5 H328.5" fill="#fff" stroke="#3a4a7a" stroke-width="0.7"/><path d="M1882.5 118.5 H1892.5 L1887.5 123.5 Z" fill="#000"/><path d="M1903.5 117.5 L1910.5 124 M1910.5 117.5 L1903.5 124" stroke="#000" stroke-width="1.6"/></svg>
<svg class="a" style="left:274px;top:139px" width="14" height="461" viewBox="274 139 14 461"><defs><pattern id="chk2" width="2" height="2" patternUnits="userSpaceOnUse"><rect width="2" height="2" fill="#ffffff"/><rect width="1" height="1" fill="#e6e6e6"/><rect x="1" y="1" width="1" height="1" fill="#e6e6e6"/></pattern></defs><rect x="274" y="139" width="14" height="461" fill="url(#chk2)"/><rect x="281" y="225" width="1" height="375" fill="#8a8a8a"/><rect x="281" y="587" width="6" height="1" fill="#8a8a8a"/><rect x="276.5" y="214.5" width="10" height="10" fill="#f4f4f4" stroke="#8a8a8a"/><rect x="278" y="219" width="7" height="1" fill="#8a8a8a"/><rect x="276.5" y="467.5" width="10" height="10" fill="#f4f4f4" stroke="#8a8a8a"/><rect x="278" y="472" width="7" height="1" fill="#8a8a8a"/></svg>
<svg class="a" style="left:200px;top:138px" width="1720" height="484" viewBox="200 138 1720 484"><rect x="1898" y="139" width="18" height="478" fill="#f0f0f0"/><rect x="1898" y="139" width="1" height="461" fill="#fafafa"/><rect x="1899" y="156" width="15" height="388" fill="#cdcdcd"/><path d="M1903.0 150 L1906.5 146.5 L1910.0 150" fill="none" stroke="#505050" stroke-width="1.9"/><path d="M1903.0 590 L1906.5 593.5 L1910.0 590" fill="none" stroke="#505050" stroke-width="1.9"/><rect x="201" y="600" width="1716" height="1" fill="#ffffff"/><rect x="201" y="601" width="1" height="16" fill="#ffffff"/><rect x="202" y="601" width="1714" height="16" fill="#f0f0f0"/><rect x="218" y="601" width="1336" height="15" fill="#cdcdcd"/><path d="M211.5 605.0 L208.0 608.5 L211.5 612.0" fill="none" stroke="#505050" stroke-width="2.1"/><path d="M1888 605.0 L1891.5 608.5 L1888 612.0" fill="none" stroke="#505050" stroke-width="1.9"/></svg>
<div class="ln" style="top:141px">1
2
3
4
5
6
7
8
9
10
11
12
13
14
15
16
17
18
19
20</div>
<div class="code" style="top:141px"><span class="pp">#include</span> <span class="st">"stm32f10x.h"</span>                  <span class="cm">// Device header</span>
<span class="pp">#include</span> <span class="st">"Delay.h"</span>
<span class="kw">int</span> main(<span class="kw">void</span>)
{
  GPIO_InitTypeDef GPIO_InitStructure;
  RCC_APB2PeriphClockCmd(RCC_APB2Periph_GPIOA,ENABLE);
  GPIO_InitStructure.GPIO_Mode = GPIO_Mode_Out_PP;
  GPIO_InitStructure.GPIO_Pin = GPIO_Pin_6;
  GPIO_InitStructure.GPIO_Speed = GPIO_Speed_50MHz;

  GPIO_Init(GPIOA,&amp;GPIO_InitStructure);

  GPIO_WriteBit(GPIOA,GPIO_Pin_6,Bit_RESET);
  <span class="kw">while</span>(<span class="nu">1</span>)
  {
    GPIO_WriteBit(GPIOA,GPIO_Pin_6,Bit_RESET);
    Delay_ms(<span class="nu">1000</span>);
    GPIO_WriteBit(GPIOA,GPIO_Pin_6,Bit_SET);
    Delay_ms(<span class="nu">1000</span>);
  }</div>
<div class="t" style="left:253.70px;top:115.32px;font-size:13.8px;font-weight:bold;transform:scaleX(0.9906);transform-origin:0 0;">main.c</div>
<div class="t" style="left:341.20px;top:114.92px;font-size:13.8px;transform:scaleX(0.9950);transform-origin:0 0;">stm32f10x.h</div>
<div class="a" style="left:478px;top:553px;width:1px;height:23px;background:#f8f8f2"></div>
<div class="a hdr" style="left:0;top:626px;width:1920px;height:27px"></div>
<div class="t" style="left:4.75px;top:633.40px;font-size:13.7px;transform:scaleX(1.0314);transform-origin:0 0;">Build Output</div>
<svg class="a" style="left:150px;top:110px" width="45" height="20" viewBox="150 110 45 20"><rect x="161.5" y="116.5" width="4" height="5" fill="#fff" stroke="#000" stroke-width="1"/><rect x="164" y="116" width="2" height="6" fill="#000"/><rect x="160" y="121.5" width="7" height="1.5" fill="#000"/><rect x="163" y="123" width="1.2" height="2.5" fill="#000"/><rect x="176" y="114" width="12" height="12" fill="#c94c4c"/><path d="M179.5 117.5 L184.5 122.5 M184.5 117.5 L179.5 122.5" stroke="#fff" stroke-width="1.5"/></svg><svg class="a" style="left:1880px;top:630px" width="40" height="20" viewBox="1880 630 40 20"><rect x="1889.5" y="636.5" width="4" height="5" fill="#fff" stroke="#000" stroke-width="1"/><rect x="1892" y="636" width="2" height="6" fill="#000"/><rect x="1888" y="641.5" width="7" height="1.5" fill="#000"/><rect x="1891" y="643" width="1.2" height="2.5" fill="#000"/><rect x="1904" y="634" width="12" height="12" fill="#c94c4c"/><path d="M1907.5 637.5 L1912.5 642.5 M1912.5 637.5 L1907.5 642.5" stroke="#fff" stroke-width="1.5"/></svg>
<div class="a" style="left:1px;top:655px;width:1918px;height:1px;background:#b4b4b4"></div>
<div class="a" style="left:3px;top:658px;width:1913px;height:2px;background:#6e6e6e"></div>
<div class="a" style="left:3px;top:658px;width:2px;height:364px;background:#6e6e6e"></div>
<div class="a" style="left:0;top:655px;width:1px;height:371px;background:#b4b4b4"></div>
<div class="bo" style="top:661px">compiling stm32f10x_usart.c...
compiling stm32f10x_wwdg.c...
compiling stm32f10x_tim.c...
compiling Delay.c...
compiling main.c...
compiling stm32f10x_it.c...
linking...
Program Size: Code=1156 RO-data=252 RW-data=0 ZI-data=1632
".\Objects\project.axf" - 0 Error(s), 0 Warning(s).
Build Time Elapsed:  00:00:03</div>
<svg class="a" style="left:0px;top:650px" width="1920" height="380" viewBox="0 650 1920 380"><rect x="1899" y="660" width="17" height="346" fill="#f0f0f0"/><rect x="1900" y="895" width="15" height="93" fill="#cdcdcd"/><path d="M1903.5 671.5 L1907 668.0 L1910.5 671.5" fill="none" stroke="#505050" stroke-width="1.9"/><path d="M1903.5 995 L1907 998.5 L1910.5 995" fill="none" stroke="#505050" stroke-width="1.9"/><rect x="5" y="1006" width="1911" height="16" fill="#f0f0f0"/><rect x="5" y="1022" width="1911" height="1" fill="#e2e2e2"/><rect x="5" y="1023" width="1911" height="2" fill="#ffffff"/><path d="M14.5 1010.0 L11.0 1013.5 L14.5 1017.0" fill="none" stroke="#b4b4b4" stroke-width="2"/><path d="M1888 1010.0 L1891.5 1013.5 L1888 1017.0" fill="none" stroke="#b4b4b4" stroke-width="2"/><rect x="1916" y="656" width="3" height="370" fill="#ffffff"/><rect x="1916" y="656" width="1" height="367" fill="#e2e2e2"/><rect x="1919" y="655" width="1" height="371" fill="#a8a8a8"/></svg>
<svg class="a" style="left:0px;top:1024px" width="1920" height="32" viewBox="0 1024 1920 32"><rect x="0" y="1026" width="1920" height="29" fill="#f7f7f7"/><rect x="3" y="1026" width="111" height="28" fill="#f0f0f0"/><path d="M0 1025.5 H2.5 M114.5 1025.5 H1920 M114.5 1025 V1054 M3 1053.5 H115" stroke="#000" fill="none"/><rect x="7.5" y="1032.5" width="13" height="12" fill="#f4f6fb" stroke="#334466"/><rect x="8" y="1033" width="12" height="2" fill="#5a8ae0"/><rect x="119.5" y="1034.5" width="15" height="11" fill="#eef2fa" stroke="#3d5580"/><rect x="120" y="1035" width="14" height="2" fill="#5a8ae0"/><g fill="#8090a8"><rect x="121" y="1040" width="3" height="1"/><rect x="121" y="1042" width="4" height="1"/></g><path d="M124.5 1035 L128 1038.5 L124.5 1042 L121 1038.5 Z" fill="#f4c830" stroke="#b08a10" stroke-width="0.6"/><path d="M130.5 1030 L133.5 1033 L130.5 1036 L127.5 1033 Z" fill="#70a8f0" stroke="#3060b0" stroke-width="0.6"/><path d="M130.5 1036.5 L134 1040 L130.5 1043.5 L127 1040 Z" fill="#f080f0" stroke="#b040b0" stroke-width="0.6"/><g fill="#6a6a7a"><rect x="10" y="1036" width="3" height="1"/><rect x="14" y="1036" width="3" height="1"/><rect x="10" y="1038" width="3" height="1"/><rect x="14" y="1038" width="3" height="1"/><rect x="10" y="1040" width="3" height="1"/></g><rect x="198" y="1030" width="1" height="21" fill="#b8b8b8"/></svg>
<div class="t" style="left:24.70px;top:1032.66px;font-size:14.1px;transform:scaleX(1.0066);transform-origin:0 0;">Build Output</div>
<div class="t" style="left:137.50px;top:1032.66px;font-size:14.1px;transform:scaleX(0.9282);transform-origin:0 0;color:#6d6d6d">Browser</div>
<div class="a" style="left:0;top:1055px;width:1920px;height:1px;background:#d8d8d8"></div>
<div class="a" style="left:0;top:1056px;width:1920px;height:22px;background:#f0f0f0"></div>
<div class="a" style="left:0;top:1078px;width:1920px;height:2px;background:#3a3a3a"></div>
<svg class="a" style="left:1200px;top:1055px" width="720" height="25" viewBox="1200 1055 720 25"><rect x="1230" y="1057" width="1" height="21" fill="#d0d0d0"/><rect x="1452" y="1057" width="1" height="21" fill="#d0d0d0"/><rect x="1619" y="1057" width="1" height="21" fill="#d0d0d0"/><rect x="1741" y="1057" width="1" height="21" fill="#d0d0d0"/><rect x="1773" y="1057" width="1" height="21" fill="#d0d0d0"/><rect x="1812" y="1057" width="1" height="21" fill="#d0d0d0"/><rect x="1849" y="1057" width="1" height="21" fill="#d0d0d0"/><rect x="1883" y="1057" width="1" height="21" fill="#d0d0d0"/></svg>
<div class="t" style="left:1235.60px;top:1062.15px;font-size:13.7px;transform:scaleX(0.9974);transform-origin:0 0;">ULINK2/ME Cortex Debugger</div>
<div class="t" style="left:1624.50px;top:1062.15px;font-size:13.7px;transform:scaleX(0.9643);transform-origin:0 0;">L:19 C:20</div>
<div class="t" style="left:1746.25px;top:1062.15px;font-size:13.7px;transform:scaleX(0.9111);transform-origin:0 0;color:#8a8a8a">CAP</div>
<div class="t" style="left:1778.10px;top:1062.15px;font-size:13.7px;transform:scaleX(1.0416);transform-origin:0 0;color:#000">NUM</div>
<div class="t" style="left:1817.25px;top:1062.15px;font-size:13.7px;transform:scaleX(0.8278);transform-origin:0 0;color:#8a8a8a">SCRL</div>
<div class="t" style="left:1854.40px;top:1062.15px;font-size:13.7px;transform:scaleX(0.9126);transform-origin:0 0;color:#8a8a8a">OVR</div>
<div class="t" style="left:1888.10px;top:1062.15px;font-size:13.7px;transform:scaleX(0.9773);transform-origin:0 0;color:#8a8a8a">R/O</div>
</body></html>
